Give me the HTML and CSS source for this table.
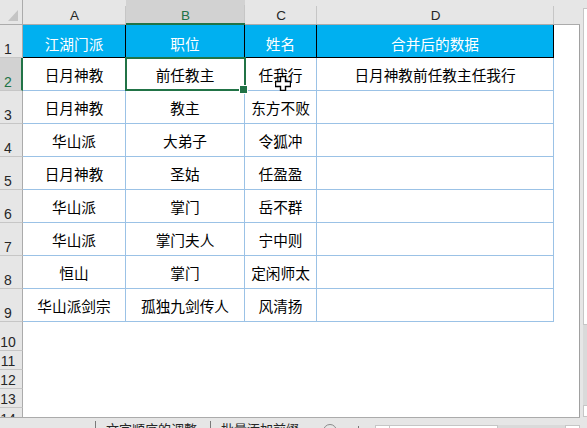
FILE: index.html
```html
<!DOCTYPE html>
<html lang="zh-CN">
<head>
<meta charset="utf-8">
<title>合并后的数据</title>
<link rel="stylesheet" href="styles.css">
</head>
<body>
<div class="main">
  <div class="sheet">
    <div class="corner"><svg width="10" height="11" viewBox="0 0 10 11"><polygon points="10,0 10,11 0,11" fill="#c4c4c4"/></svg></div>
    <div class="colhead">A</div>
    <div class="colhead sel">B</div>
    <div class="colhead">C</div>
    <div class="colhead">D</div>
    <div class="colhead last"></div>

    <div class="rowhead">1</div>
    <div class="cell title">江湖门派</div>
    <div class="cell title">职位</div>
    <div class="cell title">姓名</div>
    <div class="cell title">合并后的数据</div>
    <div class="edge"></div>

    <div class="rowhead sel">2</div>
    <div class="cell">日月神教</div>
    <div class="cell active">前任教主</div>
    <div class="cell">任我行</div>
    <div class="cell">日月神教前任教主任我行</div>
    <div class="edge"></div>

    <div class="rowhead">3</div>
    <div class="cell">日月神教</div>
    <div class="cell">教主</div>
    <div class="cell">东方不败</div>
    <div class="cell"></div>
    <div class="edge"></div>

    <div class="rowhead">4</div>
    <div class="cell">华山派</div>
    <div class="cell">大弟子</div>
    <div class="cell">令狐冲</div>
    <div class="cell"></div>
    <div class="edge"></div>

    <div class="rowhead">5</div>
    <div class="cell">日月神教</div>
    <div class="cell">圣姑</div>
    <div class="cell">任盈盈</div>
    <div class="cell"></div>
    <div class="edge"></div>

    <div class="rowhead">6</div>
    <div class="cell">华山派</div>
    <div class="cell">掌门</div>
    <div class="cell">岳不群</div>
    <div class="cell"></div>
    <div class="edge"></div>

    <div class="rowhead">7</div>
    <div class="cell">华山派</div>
    <div class="cell">掌门夫人</div>
    <div class="cell">宁中则</div>
    <div class="cell"></div>
    <div class="edge"></div>

    <div class="rowhead">8</div>
    <div class="cell">恒山</div>
    <div class="cell">掌门</div>
    <div class="cell">定闲师太</div>
    <div class="cell"></div>
    <div class="edge"></div>

    <div class="rowhead">9</div>
    <div class="cell">华山派剑宗</div>
    <div class="cell">孤独九剑传人</div>
    <div class="cell">风清扬</div>
    <div class="cell"></div>
    <div class="edge"></div>

    <div class="rowhead">10</div>
    <div class="blankrow"></div>
    <div class="rowhead">11</div>
    <div class="blankrow"></div>
    <div class="rowhead">12</div>
    <div class="blankrow"></div>
    <div class="rowhead">13</div>
    <div class="blankrow"></div>
    <div class="rowhead cut">14</div>
    <div class="blankrow"></div>

    <svg class="cursor" width="16" height="15" viewBox="0 0 16 15"><polygon points="5.5,0.5 10.5,0.5 10.5,5.5 15.5,5.5 15.5,10.5 10.5,10.5 10.5,14.5 5.5,14.5 5.5,10.5 0.5,10.5 0.5,5.5 5.5,5.5" fill="#fff" stroke="#000" stroke-width="1.4"/></svg>
  </div>
  <div class="vscroll">
    <div class="vthumb"></div>
    <div class="vtrack"></div>
    <div class="vbtn"></div>
  </div>
</div>
<div class="tabs">
  <div class="tabspace"></div>
  <div class="tab first">文字顺序的调整</div>
  <div class="tab second">批量添加前缀</div>
  <div class="newsheet"></div>
  <div class="splitter"></div>
  <div class="hscroll">
    <div class="hbtn"></div>
    <div class="hthumb"></div>
    <div class="htrack"></div>
    <div class="hbtn right"></div>
  </div>
</div>
</body>
</html>
```

FILE: styles.css
```css
* { box-sizing: border-box; }
html, body { margin: 0; padding: 0; }
body {
  width: 587px;
  height: 428px;
  overflow: hidden;
  background: #e6e6e6;
  font-family: "Noto Sans CJK SC", "Noto Sans", sans-serif;
}
.main { display: flex; height: 418px; }
.sheet {
  position: relative;
  display: grid;
  grid-template-columns: 23px 103px 119px 72px 237px 26px;
  grid-template-rows: 25px repeat(9, 33px) 29px 19px 19px 19px 9px;
  width: 580px;
  height: 418px;
  border-bottom: 1px solid #ababab;
  background: #fff;
}
.corner {
  background: #e6e6e6;
  border-right: 1px solid #ababab;
  border-bottom: 1px solid #ababab;
  display: flex;
  justify-content: flex-end;
  align-items: flex-end;
  padding: 0 4px 3px 0;
}
.corner svg { display: block; }
.colhead {
  background: #e6e6e6 linear-gradient(#c6c6c6, #c6c6c6) no-repeat right bottom / 1px 18px;
  border-bottom: 1px solid #ababab;
  font: 13.5px/15px "Liberation Sans", Arial, sans-serif;
  color: #262626;
  display: flex;
  justify-content: center;
  align-items: flex-end;
  padding-bottom: 1px;
}
.colhead.sel {
  background-color: #d2d2d2;
  border-bottom: 2px solid #217346;
  color: #217346;
  padding-bottom: 0;
}
.colhead.last { background-image: none; }
.rowhead {
  background: #e6e6e6;
  border-right: 1px solid #ababab;
  border-bottom: 1px solid #c6c6c6;
  font: 14px/14px "Liberation Sans", Arial, sans-serif;
  color: #262626;
  display: flex;
  justify-content: center;
  align-items: flex-end;
  padding: 0 6px 1px 0;
  overflow: hidden;
}
.rowhead.sel {
  background: #d2d2d2;
  border-right: 2px solid #217346;
  color: #217346;
  padding-right: 5px;
}
.rowhead.cut {
  align-items: flex-start;
  padding-top: 4px;
  border-bottom: none;
}
.cell {
  border-right: 1px solid #9bc2e6;
  border-bottom: 1px solid #9bc2e6;
  display: flex;
  justify-content: center;
  align-items: center;
  font-size: 14.67px;
  color: #000;
  white-space: nowrap;
}
.cell.title {
  background: #00b0f0;
  color: #fff;
  border-right-color: #000;
  border-bottom-color: #000;
  padding-top: 4px;
}
.cell.active { position: relative; }
.cell.active::after {
  content: "";
  position: absolute;
  left: -1px;
  top: -1px;
  right: -2px;
  bottom: -1px;
  border: 2px solid #217346;
}
.cell.active::before {
  content: "";
  position: absolute;
  right: -4px;
  bottom: -4px;
  width: 7px;
  height: 7px;
  background: #217346;
  border: 1px solid #fff;
  z-index: 1;
}
.edge { border-right: 1px solid #a0a0a0; }
.blankrow { grid-column: span 5; border-right: 1px solid #a0a0a0; }
.cursor { position: absolute; left: 275px; top: 76px; }

.vscroll {
  width: 7px;
  height: 418px;
  padding: 8px 0 0 3px;
  overflow: hidden;
  display: flex;
  flex-direction: column;
}
.vthumb { flex: none; width: 10px; height: 317px; background: #fff; border: 1px solid #c6c6c6; }
.vtrack { flex: none; width: 10px; height: 80px; background: #dadada; }
.vbtn { flex: none; width: 10px; height: 12px; background: #fff; border: 1px solid #c6c6c6; }

.tabs {
  height: 10px;
  overflow: hidden;
  display: flex;
  align-items: flex-start;
  font-size: 13px;
  line-height: 16px;
  color: #262626;
}
.tabspace { width: 95px; flex: none; }
.tab {
  flex: none;
  margin-top: 3px;
  height: 20px;
  border-left: 1px solid #7a7a7a;
  padding-left: 10px;
  white-space: nowrap;
}
.tab.first { width: 115px; }
.tab.second { width: 100px; }
.newsheet {
  flex: none;
  margin: 6px 0 0 13px;
  width: 14px;
  height: 14px;
  border: 1px solid #8a8a8a;
  border-radius: 50%;
}
.splitter {
  flex: none;
  margin: 8px 0 0 21px;
  width: 1px;
  height: 3px;
  background: #777;
}
.hscroll {
  flex: none;
  display: flex;
  margin: 7px 0 0 16px;
}
.hbtn { width: 15px; height: 12px; background: #fff; border: 1px solid #c6c6c6; }
.hbtn.right { width: 15px; }
.hthumb { width: 108px; height: 12px; background: #fff; border: 1px solid #c6c6c6; border-left: none; }
.htrack { width: 67px; height: 12px; background: #dadada; }
```
